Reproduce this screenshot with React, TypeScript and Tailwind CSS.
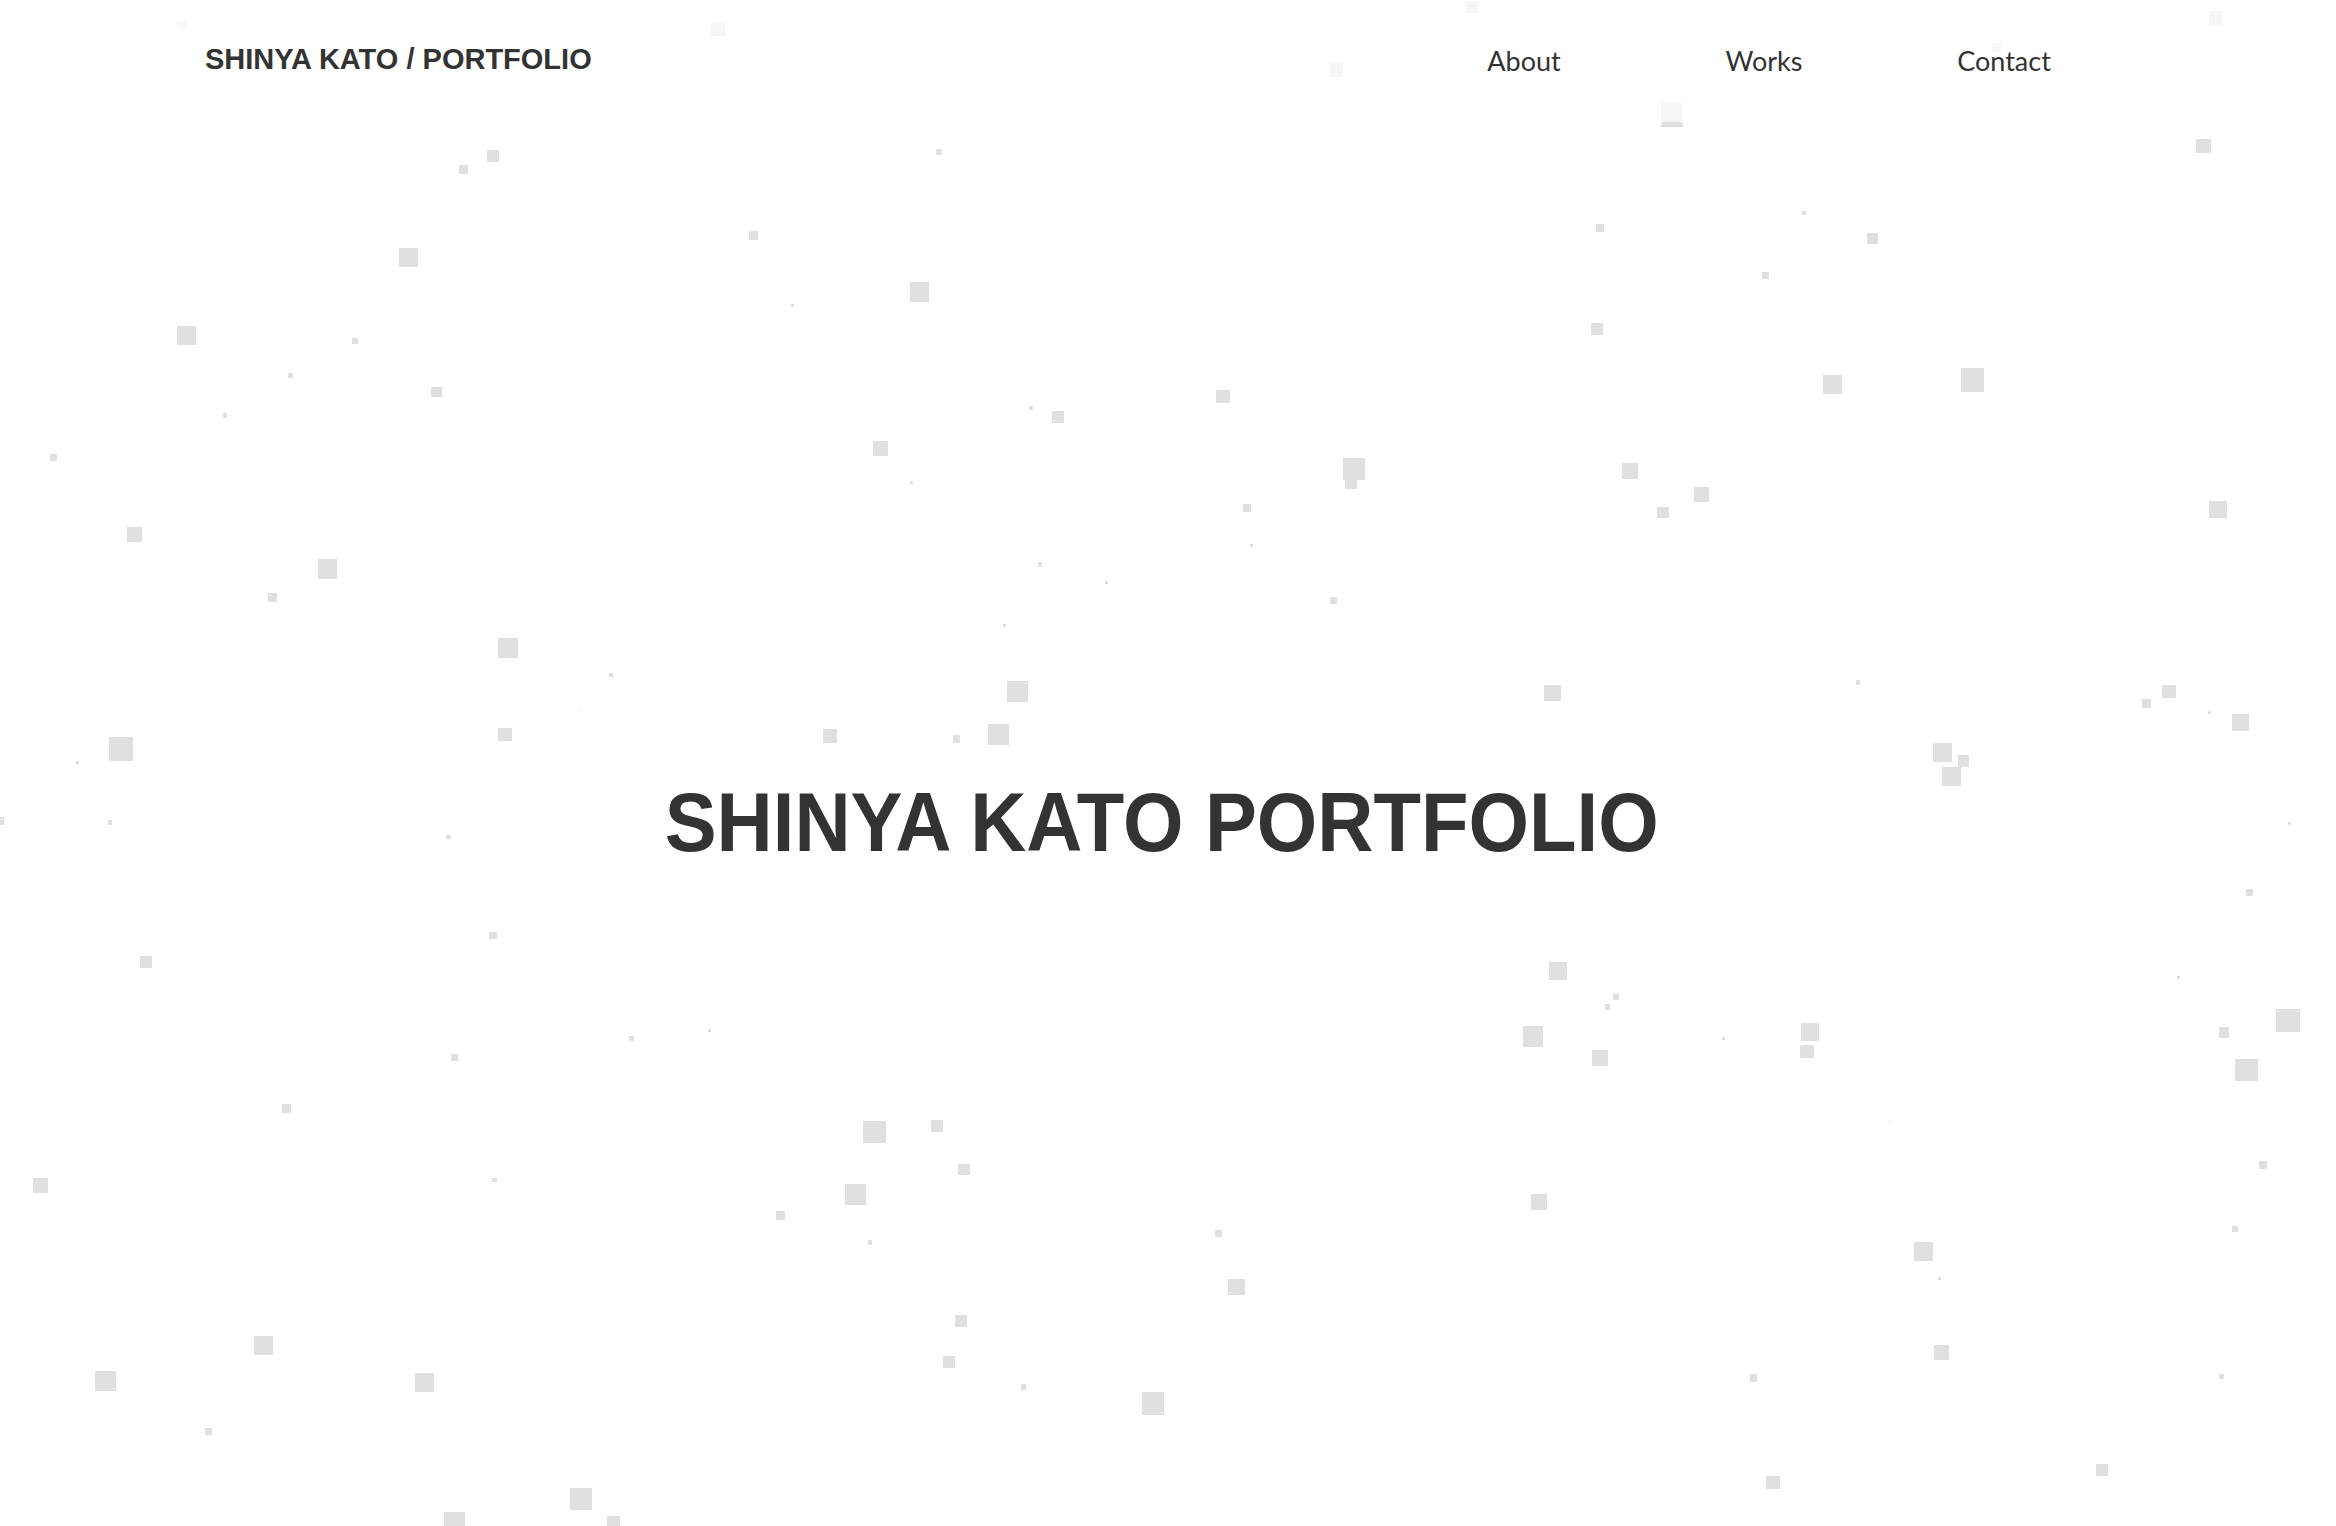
import React from "react";

const S = 2336 / 1568;

type Sq = [number, number, number, number?];

const squares: Sq[] = [
  [482, 20, 9, 0.3], [988, 5, 8, 0.3], [897, 47, 9, 0.3], [1487, 12, 9, 0.3], [122, 17, 6, 0.2], [298, 45, 6, 0.15], [1340, 32, 6, 0.2],
  [1122, 76, 14, 0.3],
  [1479, 98, 10], [331, 105, 8], [311, 114, 6], [630, 102, 4], [274, 173, 13], [506, 158, 6], [617, 196, 13], [1074, 153, 5],
  [1211, 143, 3], [1257, 160, 7], [1185, 185, 5], [125, 225, 13], [238, 229, 4], [532, 205, 2], [1072, 221, 8], [1230, 258, 13],
  [1324, 255, 16], [195, 252, 3], [293, 263, 7], [151, 279, 3], [821, 266, 9], [692, 274, 3], [710, 280, 8], [591, 301, 10],
  [36, 307, 5], [909, 315, 15], [907, 324, 8], [1094, 316, 11], [1142, 332, 10], [1116, 344, 8], [837, 341, 5], [612, 324, 2],
  [1489, 342, 12], [90, 359, 10], [840, 366, 2], [220, 382, 13], [698, 379, 3], [743, 391, 2], [183, 401, 6], [895, 403, 5],
  [674, 420, 2], [341, 435, 13], [410, 453, 3], [683, 464, 14], [1042, 465, 11], [1247, 458, 3], [1456, 464, 9], [1441, 472, 6],
  [1483, 478, 2], [1504, 485, 11], [389, 477, 1], [81, 503, 16], [339, 493, 9], [557, 494, 9], [642, 496, 5], [670, 493, 14],
  [1304, 505, 13], [1318, 511, 8], [1310, 521, 13], [52, 512, 2], [0, 551, 5], [74, 552, 3], [301, 562, 3], [1537, 553, 2],
  [1510, 599, 5], [331, 628, 5], [98, 646, 8], [1046, 652, 12], [1085, 669, 4], [1079, 676, 4], [1462, 656, 2], [1536, 685, 16],
  [1029, 696, 14], [1215, 693, 12], [1213, 706, 9], [1074, 710, 11], [1493, 693, 7], [1157, 697, 2], [1508, 718, 15], [305, 710, 5],
  [424, 697, 3], [476, 692, 2], [192, 744, 6], [587, 760, 15], [629, 756, 8], [647, 785, 8], [1269, 753, 1], [1519, 782, 5],
  [27, 796, 10], [574, 802, 14], [1033, 807, 11], [332, 792, 3], [524, 816, 6], [584, 834, 3], [818, 828, 5], [1500, 825, 4],
  [1291, 840, 13], [1302, 858, 2], [830, 864, 11], [645, 887, 8], [177, 903, 13], [1303, 908, 10], [637, 914, 8], [71, 927, 14],
  [285, 928, 13], [687, 931, 4], [1177, 925, 5], [1491, 924, 3], [774, 942, 15], [140, 961, 5], [1190, 995, 9], [1411, 987, 8],
  [390, 1006, 15], [305, 1022, 14], [412, 1022, 9],
];

function Particles() {
  return (
    <div className="pointer-events-none absolute inset-0 overflow-hidden">
      {squares.map(([x, y, s, o], i) => (
        <div
          key={i}
          className="absolute bg-[#e0e0e0]"
          style={{
            left: (x - s / 2) * S,
            top: (y - s / 2) * S,
            width: s * S,
            height: s * S,
            opacity: o ?? 1,
          }}
        />
      ))}
      <div
        className="absolute bg-[#e0e0e0]"
        style={{ left: 1115 * S, top: 82 * S, width: 15 * S, height: 3 * S }}
      />
    </div>
  );
}

export default function App() {
  return (
    <div className="relative flex h-screen w-full flex-col overflow-hidden bg-white text-[#333]">
      <Particles />
      <header className="relative flex h-[120px] shrink-0 items-start justify-between pl-[205px] pr-[212px] pt-[44px]">
        <a
          className="mt-[1px] text-[29px] font-bold leading-none text-[#333]"
          style={{ fontFamily: "'Liberation Sans', Arial, sans-serif" }}
        >
          SHINYA KATO / PORTFOLIO
        </a>
        <nav
          className="flex pt-[1px] text-[27px] leading-[1.2] text-[#333]"
          style={{ fontFamily: "Lato, sans-serif" }}
        >
          <a className="w-[240px] text-center">About</a>
          <a className="w-[240px] text-center">Works</a>
          <a className="w-[240px] text-center">Contact</a>
        </nav>
      </header>
      <main className="relative flex flex-1 items-center justify-center pr-[13px]">
        <h1
          className="-mt-[2px] scale-x-[0.926] text-[84px] font-bold leading-none text-[#333]"
          style={{ fontFamily: "'Liberation Sans', Arial, sans-serif" }}
        >
          SHINYA KATO PORTFOLIO
        </h1>
      </main>
    </div>
  );
}
